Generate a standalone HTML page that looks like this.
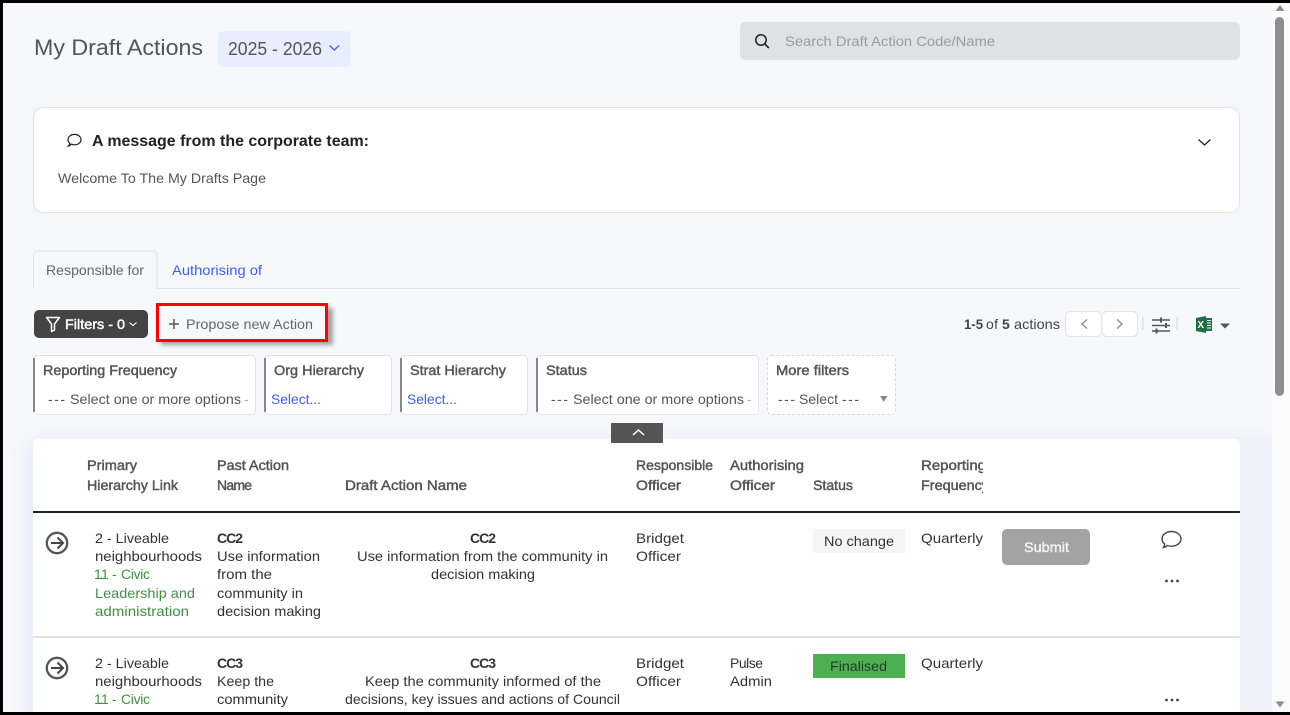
<!DOCTYPE html>
<html lang="en"><head><meta charset="utf-8"><title>My Draft Actions</title>
<style>
html,body{margin:0;padding:0;width:1290px;height:715px;overflow:hidden;background:#f7f8fb}
svg{position:absolute;left:0;top:0;display:block}
text{font-family:"Liberation Sans",sans-serif;font-size:14px;white-space:pre}
.t{fill:#333}.g{fill:#555}.b{fill:#3d5cf5}.gr{fill:#3f9142}
.sb{stroke-width:.45px}
.bd{font-weight:bold}
</style></head><body>
<svg width="1290" height="715" viewBox="0 0 1290 715" xmlns="http://www.w3.org/2000/svg">
<defs>
<filter id="sh" x="-10%" y="-30%" width="120%" height="160%"><feGaussianBlur stdDeviation="2"/></filter>
<filter id="soft" x="-5%" y="-20%" width="110%" height="140%"><feGaussianBlur stdDeviation="9"/></filter>
<clipPath id="page"><rect x="3" y="0" width="1269" height="715"/></clipPath>
</defs>
<rect width="1290" height="715" fill="#f7f8fb"/>
<g clip-path="url(#page)">
<rect x="33" y="107" width="1207" height="105" fill="#f1f3f9" filter="url(#soft)"/>
<rect x="24" y="437" width="1260" height="300" fill="#eaeef9" filter="url(#soft)"/>
<rect x="1240" y="445" width="32" height="270" fill="#eef1f9"/>
</g>
<rect x="1272" y="0" width="18" height="715" fill="#fbfbfb"/>

<!-- header -->
<text x="34" y="55" textLength="169" lengthAdjust="spacingAndGlyphs" class="g" style="font-size:22px">My Draft Actions</text>
<rect x="218" y="31" width="133" height="36" rx="5" fill="#e8eefd"/>
<text x="228" y="55" textLength="94" lengthAdjust="spacingAndGlyphs" class="g" style="font-size:18.5px">2025 - 2026</text>
<path d="M329.500 45.500l4.800 4.500 4.800-4.500" fill="none" stroke="#3d5cf5" stroke-width="1.200"/>

<rect x="740" y="22" width="500" height="38" rx="5" fill="#e0e1e3"/>
<circle cx="761" cy="40" r="5.200" fill="none" stroke="#222" stroke-width="1.500"/>
<path d="M764.800 44l4 4" stroke="#222" stroke-width="1.600" fill="none"/>
<text x="785" y="46" textLength="210" lengthAdjust="spacingAndGlyphs" fill="#9c9c9c">Search Draft Action Code/Name</text>

<!-- message card -->
<rect x="33.500" y="107.500" width="1206" height="105" rx="10" fill="#fff" stroke="#e2e2e4"/>
<path d="M68.300 146c1.500-.4 2.400-1 3.100-1.800 1 .4 2 .6 3.100.6 3.700 0 6.500-2.300 6.500-5.200s-2.900-5.200-6.500-5.200-6.500 2.300-6.500 5.200c0 1.500.7 2.800 1.900 3.800-.2 1-.8 1.800-1.600 2.600z" fill="none" stroke="#222" stroke-width="1.200"/>
<text x="92" y="146" textLength="277" lengthAdjust="spacingAndGlyphs" fill="#222" class="bd" style="font-size:15.500px">A message from the corporate team:</text>
<text x="58" y="183" textLength="208" lengthAdjust="spacingAndGlyphs" class="g">Welcome To The My Drafts Page</text>
<path d="M1198.500 139.500l6 5.500 6-5.500" fill="none" stroke="#222" stroke-width="1.300"/>

<!-- tabs -->
<path d="M33 288.500H1240" stroke="#e0e1e4"/>
<path d="M33.500 289V255a4 4 0 0 1 4-4H153a4 4 0 0 1 4 4V289" fill="#f7f8fb" stroke="#e0e1e4"/>
<text x="46" y="275" textLength="98" lengthAdjust="spacingAndGlyphs" fill="#666">Responsible for</text>
<text x="172" y="275" textLength="90" lengthAdjust="spacingAndGlyphs" class="b">Authorising of</text>

<!-- toolbar -->
<rect x="34" y="310" width="114" height="28" rx="5" fill="#444"/>
<path d="M46.500 317.500h13l-5 6.500v6l-3 1.500v-7.500z" fill="none" stroke="#fff" stroke-width="1.500" stroke-linejoin="round"/>
<text x="65" y="329" textLength="60" lengthAdjust="spacingAndGlyphs" fill="#fff" stroke="#fff" class="sb">Filters - 0</text>
<path d="M129.500 322.500l3.500 3 3.500-3" fill="none" stroke="#fff" stroke-width="1.100"/>

<rect x="161" y="308" width="172" height="37" fill="#000" opacity=".35" filter="url(#sh)"/>
<rect x="157.500" y="304.500" width="169" height="36" fill="#f7f8fb" stroke="#f00" stroke-width="3"/>
<path d="M169 324h10M174 319v10" stroke="#555" stroke-width="1.500" fill="none"/>
<text x="186" y="329" textLength="127" lengthAdjust="spacingAndGlyphs" fill="#666">Propose new Action</text>

<text x="964" y="329" textLength="19" lengthAdjust="spacingAndGlyphs" fill="#444" class="bd">1-5</text>
<text x="986" y="329" textLength="12" lengthAdjust="spacing" fill="#444">of</text>
<text x="1002" y="329" textLength="8" lengthAdjust="spacing" fill="#444" class="bd">5</text>
<text x="1014" y="329" textLength="46" lengthAdjust="spacingAndGlyphs" fill="#444">actions</text>
<rect x="1065.500" y="311.500" width="36" height="25" rx="5" fill="#fff" stroke="#e4e4e4"/>
<rect x="1102" y="311.500" width="35.500" height="25" rx="5" fill="#fff" stroke="#e4e4e4"/>
<path d="M1087 319.500l-5 4.500 5 4.500M1117 319.500l5 4.500-5 4.500" fill="none" stroke="#888" stroke-width="1.200"/>
<rect x="1142" y="317" width="2" height="13" fill="#e6e6e8"/><rect x="1176" y="317" width="2" height="13" fill="#e6e6e8"/>
<path d="M1152 320h18M1152 325.500h18M1152 331h18" stroke="#555" stroke-width="1.600" fill="none"/>
<path d="M1161 317.500v5M1166 323v5M1156.500 328.500v5" stroke="#555" stroke-width="2" fill="none"/>
<path d="M1196 318l10-2v17l-10-2z" fill="#1d7044"/>
<rect x="1205" y="318" width="7" height="13" fill="#1d7044"/>
<path d="M1207 320.500h4M1207 323h4M1207 325.500h4M1207 328h4" stroke="#fff" stroke-width="1"/>
<text x="1197.500" y="328" textLength="6.500" lengthAdjust="spacingAndGlyphs" fill="#fff" class="bd" style="font-size:10px">X</text>
<path d="M1220 323.500h10l-5 5z" fill="#555"/>

<!-- filter cards -->
<rect x="33.500" y="355.500" width="222" height="59" rx="4" fill="#fff" stroke="#e2e2e4"/><path d="M34 358v54" stroke="#888" stroke-width="2"/>
<rect x="264.500" y="355.500" width="127" height="59" rx="4" fill="#fff" stroke="#e2e2e4"/><path d="M265 358v54" stroke="#888" stroke-width="2"/>
<rect x="400.500" y="355.500" width="127" height="59" rx="4" fill="#fff" stroke="#e2e2e4"/><path d="M401 358v54" stroke="#888" stroke-width="2"/>
<rect x="536.500" y="355.500" width="222" height="59" rx="4" fill="#fff" stroke="#e2e2e4"/><path d="M537 358v54" stroke="#888" stroke-width="2"/>
<rect x="767.500" y="355.500" width="128" height="59" rx="4" fill="#fff" stroke="#d8d8d8" stroke-dasharray="3 2"/>
<g fill="#555" stroke="#555">
<text x="43" y="375" textLength="134" lengthAdjust="spacingAndGlyphs" class="sb">Reporting Frequency</text>
<text x="274" y="375" textLength="90" lengthAdjust="spacingAndGlyphs" class="sb">Org Hierarchy</text>
<text x="410" y="375" textLength="96" lengthAdjust="spacingAndGlyphs" class="sb">Strat Hierarchy</text>
<text x="546" y="375" textLength="41" lengthAdjust="spacingAndGlyphs" class="sb">Status</text>
<text x="776" y="375" textLength="73" lengthAdjust="spacingAndGlyphs" class="sb">More filters</text>
</g>
<text x="48" y="404" textLength="17" lengthAdjust="spacing" class="g">---</text>
<text x="70" y="404" textLength="171" lengthAdjust="spacingAndGlyphs" class="g">Select one or more options</text>
<text x="244" y="404" fill="#aaa">-</text>
<text x="551" y="404" textLength="17" lengthAdjust="spacing" class="g">---</text>
<text x="573" y="404" textLength="171" lengthAdjust="spacingAndGlyphs" class="g">Select one or more options</text>
<text x="747" y="404" fill="#aaa">-</text>
<text x="271" y="404" textLength="50" lengthAdjust="spacingAndGlyphs" class="b">Select...</text>
<text x="407" y="404" textLength="50" lengthAdjust="spacingAndGlyphs" class="b">Select...</text>
<text x="778" y="404" textLength="17" lengthAdjust="spacing" class="g">---</text>
<text x="799" y="404" textLength="39" lengthAdjust="spacingAndGlyphs" class="g">Select</text>
<text x="842" y="404" textLength="17" lengthAdjust="spacing" class="g">---</text>
<path d="M880 396h7.500l-3.750 6z" fill="#888"/>

<!-- table -->
<path d="M33 712V444a5 5 0 0 1 5-5H1235a5 5 0 0 1 5 5V712z" fill="#fff"/>
<rect x="611" y="423" width="52" height="20" fill="#555"/>
<path d="M633 435l5.500-5 5.500 5" fill="none" stroke="#fff" stroke-width="1.500"/>

<g fill="#555" stroke="#555">
<text x="87" y="470" textLength="50" lengthAdjust="spacingAndGlyphs" class="sb">Primary</text>
<text x="87" y="490" textLength="91" lengthAdjust="spacingAndGlyphs" class="sb">Hierarchy Link</text>
<text x="217" y="470" textLength="72" lengthAdjust="spacingAndGlyphs" class="sb">Past Action</text>
<text x="217" y="490" textLength="35" lengthAdjust="spacing" class="sb">Name</text>
<text x="345" y="490" textLength="122" lengthAdjust="spacingAndGlyphs" class="sb">Draft Action Name</text>
<text x="636" y="470" textLength="77" lengthAdjust="spacingAndGlyphs" class="sb">Responsible</text>
<text x="636" y="490" textLength="45" lengthAdjust="spacingAndGlyphs" class="sb">Officer</text>
<text x="730" y="470" textLength="74" lengthAdjust="spacingAndGlyphs" class="sb">Authorising</text>
<text x="730" y="490" textLength="45" lengthAdjust="spacingAndGlyphs" class="sb">Officer</text>
<text x="813" y="490" textLength="40" lengthAdjust="spacingAndGlyphs" class="sb">Status</text>
<text x="921" y="470" textLength="65" lengthAdjust="spacingAndGlyphs" class="sb">Reporting</text>
<text x="921" y="490" textLength="68" lengthAdjust="spacingAndGlyphs" class="sb">Frequency</text>
</g>
<rect x="983" y="455" width="10" height="40" fill="#fff"/>
<rect x="33" y="511" width="1207" height="2" fill="#222"/>

<!-- row 1 -->
<circle cx="57" cy="543" r="10.200" fill="none" stroke="#555" stroke-width="2.300"/>
<path d="M51 543h11M57.500 537.500l5.500 5.500-5.500 5.500" fill="none" stroke="#444" stroke-width="2"/>
<text x="95" y="543" textLength="74" lengthAdjust="spacingAndGlyphs" class="t">2 - Liveable</text>
<text x="95" y="561" textLength="107" lengthAdjust="spacingAndGlyphs" class="t">neighbourhoods</text>
<text x="94 99.500 101" y="579" class="gr">1.1</text>
<text x="112" y="579" class="gr">-</text>
<text x="121" y="579" textLength="29" lengthAdjust="spacing" class="gr">Civic</text>
<text x="95" y="598" textLength="100" lengthAdjust="spacingAndGlyphs" class="gr">Leadership and</text>
<text x="95" y="616" textLength="94" lengthAdjust="spacingAndGlyphs" class="gr">administration</text>
<text x="217" y="543" textLength="26" lengthAdjust="spacing" class="t bd">CC2</text>
<text x="217" y="561" textLength="103" lengthAdjust="spacingAndGlyphs" class="t">Use information</text>
<text x="217" y="579" textLength="55" lengthAdjust="spacingAndGlyphs" class="t">from the</text>
<text x="217" y="598" textLength="86" lengthAdjust="spacingAndGlyphs" class="t">community in</text>
<text x="217" y="616" textLength="104" lengthAdjust="spacingAndGlyphs" class="t">decision making</text>
<text x="470" y="543" textLength="26" lengthAdjust="spacing" class="t bd">CC2</text>
<text x="357" y="561" textLength="251" lengthAdjust="spacingAndGlyphs" class="t">Use information from the community in</text>
<text x="431" y="579" textLength="104" lengthAdjust="spacingAndGlyphs" class="t">decision making</text>
<text x="636" y="543" textLength="48" lengthAdjust="spacingAndGlyphs" class="t">Bridget</text>
<text x="636" y="561" textLength="45" lengthAdjust="spacingAndGlyphs" class="t">Officer</text>
<rect x="813" y="529" width="92" height="24" fill="#f5f5f5"/>
<text x="824" y="546" textLength="70" lengthAdjust="spacingAndGlyphs" class="t">No change</text>
<text x="921" y="543" textLength="62" lengthAdjust="spacingAndGlyphs" class="t">Quarterly</text>
<rect x="1002" y="529" width="88" height="36" rx="5" fill="#a3a3a3"/>
<text x="1024" y="552" textLength="45" lengthAdjust="spacingAndGlyphs" fill="#f2f2f2" stroke="#f2f2f2" class="sb">Submit</text>
<path d="M1163.500 547.500c1.600-.3 2.800-1 3.700-2 1.400.5 2.800.7 4.300.7 5.300 0 9.500-3.200 9.500-7.200s-4.200-7.500-9.500-7.500-9.500 3.400-9.500 7.500c0 2 1 3.800 2.600 5.100-.1 1.300-.5 2.500-1.100 3.400z" fill="none" stroke="#444" stroke-width="1.400"/>
<g fill="#444"><circle cx="1166.500" cy="581" r="1.400"/><circle cx="1172" cy="581" r="1.400"/><circle cx="1177.500" cy="581" r="1.400"/></g>
<rect x="33" y="636" width="1207" height="2" fill="#e2e2e4"/>

<!-- row 2 -->
<circle cx="57" cy="668" r="10.200" fill="none" stroke="#555" stroke-width="2.300"/>
<path d="M51 668h11M57.500 662.500l5.500 5.500-5.500 5.500" fill="none" stroke="#444" stroke-width="2"/>
<text x="95" y="668" textLength="74" lengthAdjust="spacingAndGlyphs" class="t">2 - Liveable</text>
<text x="95" y="686" textLength="107" lengthAdjust="spacingAndGlyphs" class="t">neighbourhoods</text>
<text x="94 99.500 101" y="704" class="gr">1.1</text>
<text x="112" y="704" class="gr">-</text>
<text x="121" y="704" textLength="29" lengthAdjust="spacing" class="gr">Civic</text>
<text x="217" y="668" textLength="26" lengthAdjust="spacing" class="t bd">CC3</text>
<text x="217" y="686" textLength="57" lengthAdjust="spacingAndGlyphs" class="t">Keep the</text>
<text x="217" y="704" textLength="71" lengthAdjust="spacingAndGlyphs" class="t">community</text>
<text x="470" y="668" textLength="26" lengthAdjust="spacing" class="t bd">CC3</text>
<text x="365" y="686" textLength="236" lengthAdjust="spacingAndGlyphs" class="t">Keep the community informed of the</text>
<text x="345" y="704" textLength="275" lengthAdjust="spacingAndGlyphs" class="t">decisions, key issues and actions of Council</text>
<text x="636" y="668" textLength="48" lengthAdjust="spacingAndGlyphs" class="t">Bridget</text>
<text x="636" y="686" textLength="45" lengthAdjust="spacingAndGlyphs" class="t">Officer</text>
<text x="730" y="668" textLength="33" lengthAdjust="spacing" class="t">Pulse</text>
<text x="730" y="686" textLength="42" lengthAdjust="spacingAndGlyphs" class="t">Admin</text>
<rect x="813" y="654" width="92" height="24" fill="#4caf50"/>
<text x="830" y="671" textLength="57" lengthAdjust="spacingAndGlyphs" fill="#2b3b2c">Finalised</text>
<text x="921" y="668" textLength="62" lengthAdjust="spacingAndGlyphs" class="t">Quarterly</text>
<g fill="#444"><circle cx="1166.500" cy="700" r="1.400"/><circle cx="1172" cy="700" r="1.400"/><circle cx="1177.500" cy="700" r="1.400"/></g>

<!-- scrollbar -->
<rect x="1275" y="17" width="9" height="379" rx="4.500" fill="#8e8e8e"/>
<path d="M1275.500 11l4.500-6 4.500 6z" fill="#8e8e8e"/>
<path d="M1275.500 701.500h9l-4.500 6z" fill="#8e8e8e"/>

<!-- window frame -->
<rect x="0" y="0" width="1290" height="3" fill="#000"/>
<rect x="0" y="0" width="3" height="715" fill="#000"/>
<rect x="0" y="712" width="1290" height="3" fill="#000"/>
</svg>
</body></html>
